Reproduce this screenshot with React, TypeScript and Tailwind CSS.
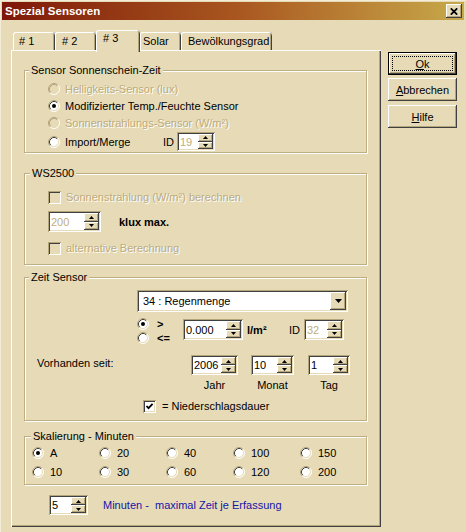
import React from "react";

const SUNKEN =
  "shadow-[inset_1px_1px_0_#b5a57c,inset_-1px_-1px_0_#ffffff,inset_2px_2px_0_#404040,inset_-2px_-2px_0_#e7dbb7]";
const RAISED =
  "shadow-[inset_-1px_-1px_0_#404040,inset_1px_1px_0_#ffffff,inset_-2px_-2px_0_#b5a57c,inset_2px_2px_0_#e7dbb7]";
const DIS = "text-[#bcab7c] [text-shadow:1px_1px_0_#ffffff]";

function Radio({ checked, disabled }: { checked?: boolean; disabled?: boolean }) {
  return (
    <svg width="12" height="12" viewBox="0 0 12 12" className="shrink-0">
      <circle cx="6" cy="6" r="5" fill={disabled ? "#e7dbb7" : "#ffffff"} />
      <path d="M2.11 9.89 A5.5 5.5 0 0 1 9.89 2.11" stroke="#b5a57c" fill="none" />
      <path d="M9.89 2.11 A5.5 5.5 0 0 1 2.11 9.89" stroke="#ffffff" fill="none" />
      <path d="M2.82 9.18 A4.5 4.5 0 0 1 9.18 2.82" stroke={disabled ? "#b5a57c" : "#404040"} fill="none" />
      <path d="M9.18 2.82 A4.5 4.5 0 0 1 2.82 9.18" stroke="#e7dbb7" fill="none" />
      {checked && <circle cx="6" cy="6" r="2" fill="#000000" />}
    </svg>
  );
}

function Check({ checked, disabled }: { checked?: boolean; disabled?: boolean }) {
  return (
    <div className={"w-[13px] h-[13px] shrink-0 flex items-center justify-center " + SUNKEN + " " + (disabled ? "bg-[#e7dbb7]" : "bg-white")}>
      {checked && (
        <svg width="13" height="13" viewBox="0 0 13 13">
          <path d="M3.5 6 L5.5 8.2 L9.6 3.8" stroke="#000" strokeWidth="1.8" fill="none" />
        </svg>
      )}
    </div>
  );
}

function SpinBtn({ up }: { up?: boolean }) {
  return (
    <div className={"flex-1 bg-[#e7dbb7] flex items-center justify-center " + RAISED}>
      <svg width="5" height="3" viewBox="0 0 5 3">
        {up ? <path d="M2.5 0 L5 3 L0 3 Z" fill="#000" /> : <path d="M0 0 L5 0 L2.5 3 Z" fill="#000" />}
      </svg>
    </div>
  );
}

function Spin({ value, className, disabled }: { value: string; className: string; disabled?: boolean }) {
  return (
    <div className={"flex shrink-0 bg-white p-[2px] " + SUNKEN + " " + className}>
      <div className={"flex-1 flex items-center pl-[1px] " + (disabled ? "text-[#c0ae7a]" : "text-black")}>{value}</div>
      <div className="flex flex-col w-[15px]">
        <SpinBtn up />
        <SpinBtn />
      </div>
    </div>
  );
}

function Group({ title, legendClass, className, children }: { title: string; legendClass: string; className: string; children: React.ReactNode }) {
  return (
    <div className={"w-[343px] border border-[#bfae82] shadow-[1px_1px_0_#ffffff,inset_1px_1px_0_#ffffff] flex flex-col " + className}>
      <div className={"-mt-[8px] w-fit bg-[#e7dbb7] px-[2px] leading-[14px] " + legendClass}>{title}</div>
      {children}
    </div>
  );
}

function Btn({ children, def }: { children: React.ReactNode; def?: boolean }) {
  if (def) {
    return (
      <div className="w-[69px] h-[23px] border border-black flex">
        <div className={"flex-1 bg-[#e7dbb7] p-[3px] flex " + RAISED}>
          <div className="flex-1 border border-dotted border-black flex items-center justify-center">{children}</div>
        </div>
      </div>
    );
  }
  return <div className={"w-[69px] h-[23px] bg-[#e7dbb7] flex items-center justify-center " + RAISED}>{children}</div>;
}

const TAB = "h-[18px] flex items-center bg-[#e7dbb7] rounded-t-[3px] shadow-[inset_1px_0_0_#ffffff,inset_0_1px_0_#ffffff,inset_-1px_0_0_#404040,inset_-2px_0_0_#b5a57c]";

export default function App() {
  return (
    <div className="w-[466px] h-[532px] overflow-hidden bg-[#e7dbb7] flex flex-col px-[2px] pt-[2px] font-['Liberation_Sans',sans-serif] text-[11px] leading-[14px] text-black shadow-[inset_1px_1px_0_#f3ecd6]">
      {/* Title bar */}
      <div className="h-[18px] shrink-0 flex items-center justify-between bg-linear-to-r from-[#7e1609] via-[#a8551f] to-[#c6a94a] pl-[3px] pr-[2px]">
        <span className="text-white font-bold text-[11.5px]">Spezial Sensoren</span>
        <div className={"w-[16px] h-[14px] bg-[#e7dbb7] flex items-center justify-center " + RAISED}>
          <svg width="8" height="7" viewBox="0 0 8 7">
            <path d="M0.8 0.3 L7.2 6.7 M7.2 0.3 L0.8 6.7" stroke="#000" strokeWidth="1.7" />
          </svg>
        </div>
      </div>

      {/* Body */}
      <div className="flex pt-[10px] pl-[9px]">
        <div className="flex flex-col w-[370px]">
          {/* Tabs */}
          <div className="flex items-end h-[20px] pl-[2px]">
            <div className={TAB + " w-[42px] pl-[6px]"}># 1</div>
            <div className={TAB + " w-[41px] pl-[7px]"}># 2</div>
            <div className="relative z-10 w-[44px] h-[22px] -mb-[2px] flex items-start pt-[1px] pl-[7px] bg-[#e7dbb7] rounded-t-[3px] shadow-[inset_1px_0_0_#ffffff,inset_0_1px_0_#ffffff,inset_-1px_0_0_#404040,inset_-2px_0_0_#b5a57c]">
              # 3
            </div>
            <div className={TAB + " w-[41px] pl-[3px]"}>Solar</div>
            <div className={TAB + " w-[91px] pl-[7px]"}>Bewölkungsgrad</div>
          </div>

          {/* Page */}
          <div className="h-[477px] flex flex-col pl-[13px] pt-[20px] shadow-[inset_1px_1px_0_#ffffff,inset_-1px_-1px_0_#404040,inset_-2px_-2px_0_#b5a57c]">
            {/* G1 */}
            <Group title="Sensor Sonnenschein-Zeit" legendClass="ml-[4px]" className="pb-[1px]">
              <div className="mt-[3px] h-[17px] flex items-center pl-[23px] gap-[5px]">
                <Radio disabled />
                <span className={DIS}>Helligkeits-Sensor (lux)</span>
              </div>
              <div className="h-[17px] flex items-center pl-[23px] gap-[5px]">
                <Radio checked />
                <span>Modifizierter Temp./Feuchte Sensor</span>
              </div>
              <div className="h-[17px] flex items-center pl-[23px] gap-[5px]">
                <Radio disabled />
                <span className={DIS}>Sonnenstrahlungs-Sensor (W/m²)</span>
              </div>
              <div className="mt-[1px] h-[19px] flex items-center pl-[23px]">
                <Radio />
                <span className="ml-[5px] w-[98px]">Import/Merge</span>
                <span className="w-[14px]">ID</span>
                <Spin value="19" disabled className="w-[38px] h-[19px]" />
              </div>
            </Group>

            {/* G2 */}
            <Group title="WS2500" legendClass="ml-[5px]" className="mt-[20px] pb-[9px]">
              <div className="mt-[10px] flex items-center pl-[23px] gap-[5px]">
                <Check disabled />
                <span className={DIS}>Sonnenstrahlung (W/m²) berechnen</span>
              </div>
              <div className="mt-[7px] flex items-center pl-[23px]">
                <Spin value="200" disabled className="w-[53px] h-[21px]" />
                <span className="ml-[18px] font-bold">klux max.</span>
              </div>
              <div className="mt-[9px] flex items-center pl-[23px] gap-[5px]">
                <Check disabled />
                <span className={DIS}>alternative Berechnung</span>
              </div>
            </Group>

            {/* G3 */}
            <Group title="Zeit Sensor" legendClass="ml-[4px]" className="mt-[12px] pb-[7px]">
              <div className={"mt-[6px] ml-[112px] w-[211px] h-[22px] bg-white p-[2px] flex " + SUNKEN}>
                <div className="flex-1 flex items-center pl-[4px]">34 : Regenmenge</div>
                <div className={"w-[16px] bg-[#e7dbb7] flex items-center justify-center " + RAISED}>
                  <svg width="7" height="4" viewBox="0 0 7 4">
                    <path d="M0 0 L7 0 L3.5 4 Z" fill="#000" />
                  </svg>
                </div>
              </div>
              <div className="mt-[7px] flex items-start pl-[112px]">
                <div className="flex flex-col w-[46px] -mt-[2px]">
                  <div className="h-[14px] flex items-center">
                    <Radio checked />
                    <span className="ml-[8px] font-bold">&gt;</span>
                  </div>
                  <div className="h-[14px] flex items-center">
                    <Radio />
                    <span className="ml-[8px] font-bold">&lt;=</span>
                  </div>
                </div>
                <Spin value="0.000" className="w-[60px] h-[21px]" />
                <span className="ml-[4px] w-[42px] h-[21px] flex items-center font-bold">l/m²</span>
                <span className="w-[15px] h-[21px] flex items-center">ID</span>
                <Spin value="32" disabled className="w-[40px] h-[21px]" />
              </div>
              <div className="mt-[10px] flex items-start pl-[12px]">
                <span className="w-[154px] mt-[1px]">Vorhanden seit:</span>
                <Spin value="2006" className="w-[47px] h-[20px]" />
                <Spin value="10" className="ml-[13px] w-[43px] h-[20px]" />
                <Spin value="1" className="ml-[14px] w-[42px] h-[20px]" />
              </div>
              <div className="mt-[3px] flex pl-[166px]">
                <span className="w-[47px] text-center">Jahr</span>
                <span className="ml-[13px] w-[43px] text-center">Monat</span>
                <span className="ml-[14px] w-[42px] text-center">Tag</span>
              </div>
              <div className="mt-[7px] flex items-center pl-[118px] gap-[6px]">
                <Check checked />
                <span>= Niederschlagsdauer</span>
              </div>
            </Group>

            {/* G4 */}
            <Group title="Skalierung - Minuten" legendClass="ml-[6px]" className="mt-[15px] pb-[5px]">
              <div className="mt-[3px] pl-[7px] grid grid-cols-[repeat(5,67px)] gap-y-[5px]">
                {[
                  ["A", true],
                  ["20", false],
                  ["40", false],
                  ["100", false],
                  ["150", false],
                  ["10", false],
                  ["30", false],
                  ["60", false],
                  ["120", false],
                  ["200", false],
                ].map(([label, checked]) => (
                  <div key={label as string} className="h-[14px] flex items-center gap-[6px]">
                    <Radio checked={checked as boolean} />
                    <span>{label as string}</span>
                  </div>
                ))}
              </div>
            </Group>

            <div className="mt-[10px] ml-[25px] flex items-center">
              <Spin value="5" className="w-[39px] h-[20px]" />
              <span className="ml-[15px] text-[#1414a8] whitespace-pre">Minuten -  maximal Zeit je Erfassung</span>
            </div>
          </div>
        </div>

        {/* Buttons */}
        <div className="flex flex-col ml-[7px] mt-[22px]">
          <Btn def>
            <span>
              <span className="underline">O</span>k
            </span>
          </Btn>
          <div className="mt-[3px]">
            <Btn>
              <span>
                <span className="underline">A</span>bbrechen
              </span>
            </Btn>
          </div>
          <div className="mt-[4px]">
            <Btn>
              <span>
                <span className="underline">H</span>ilfe
              </span>
            </Btn>
          </div>
        </div>
      </div>
    </div>
  );
}
